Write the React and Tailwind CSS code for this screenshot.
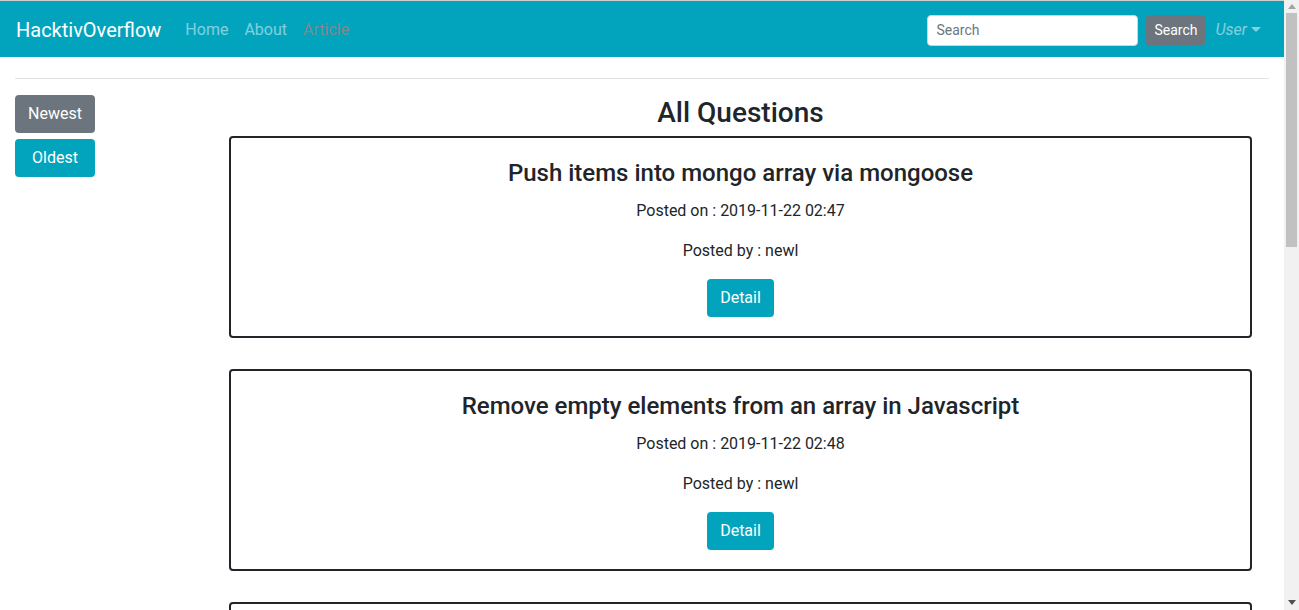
import React from 'react';

const questions = [
  { title: 'Push items into mongo array via mongoose', date: '2019-11-22 02:47', author: 'newl' },
  { title: 'Remove empty elements from an array in Javascript', date: '2019-11-22 02:48', author: 'newl' },
  { title: 'How to sort an array of objects by property value', date: '2019-11-22 02:50', author: 'newl' },
];

function Navbar() {
  return (
    <nav className="flex items-center h-[57px] border-t border-[#cfcfcf] bg-[#02a4bd] pt-[2px] pl-4 pr-[23px]">
      <span className="text-[20px] text-white mr-[24px]">HacktivOverflow</span>
      <div className="flex items-center gap-[16px] text-[16px]">
        <a className="text-white/50">Home</a>
        <a className="text-white/50">About</a>
        <a className="text-[#7c8a8e]">Article</a>
      </div>
      <div className="flex-1" />
      <div className="flex items-center">
        <input
          placeholder="Search"
          className="w-[211px] h-[31px] rounded-[4px] bg-white border border-[#ced4da] px-2 text-[14px] text-[#495057] placeholder:text-[#6c757d] outline-none"
        />
        <button className="ml-2 h-[31px] px-2 rounded-[4px] bg-[#6c757d] text-white text-[14px]">Search</button>
        <span className="ml-[10px] text-[16px] italic text-white/50 flex items-center">
          User
          <svg width="10" height="6" viewBox="0 0 10 6" className="ml-[4px]"><path d="M0 0h10L5 5z" fill="currentColor" /></svg>
        </span>
      </div>
    </nav>
  );
}

function QuestionCard({ q }) {
  return (
    <div className="border-2 border-[#212529] rounded-[4px] pt-[21px] pb-[19px] flex flex-col items-center text-[#212529]">
      <h3 className="text-[24px] leading-[29px] font-medium mb-[11px]">{q.title}</h3>
      <p className="text-[16px] leading-[24px] mb-4">Posted on : {q.date}</p>
      <p className="text-[16px] leading-[24px] mb-4">Posted by : {q.author}</p>
      <button className="h-[38px] px-[13px] rounded-[4px] bg-[#02a4bd] text-white text-[16px]">Detail</button>
    </div>
  );
}

function Scrollbar() {
  return (
    <div className="w-[15px] h-screen bg-[#f1f1f1] flex flex-col items-center shrink-0">
      <div className="h-[13px] flex items-center justify-center">
        <svg width="8" height="5" viewBox="0 0 8 5"><path d="M0 5h8L4 0z" fill="#a3a3a3" /></svg>
      </div>
      <div className="w-[11px] h-[234px] bg-[#c1c1c1]" />
      <div className="flex-1" />
      <div className="h-[15px] flex items-center justify-center">
        <svg width="8" height="5" viewBox="0 0 8 5"><path d="M0 0h8L4 5z" fill="#505050" /></svg>
      </div>
    </div>
  );
}

export default function App() {
  return (
    <div className="flex h-screen overflow-hidden bg-white" style={{ fontFamily: 'Roboto, "Liberation Sans", sans-serif' }}>
      <div className="flex-1 min-w-0">
        <Navbar />
        <div className="px-[15px]">
          <hr className="mt-[21px] border-t border-[#e3e3e3]" />
          <div className="flex mt-4">
            <div className="w-[199px] flex flex-col gap-[6px] shrink-0">
              <button className="w-20 h-[38px] rounded-[4px] bg-[#6c757d] text-white text-[16px]">Newest</button>
              <button className="w-20 h-[38px] rounded-[4px] bg-[#02a4bd] text-white text-[16px]">Oldest</button>
            </div>
            <div className="flex-1 pl-[15px] pr-[17px]">
              <h2 className="text-center text-[28px] leading-[34px] font-medium text-[#212529] mt-px mb-[6px]">All Questions</h2>
              <div className="flex flex-col gap-[31px]">
                {questions.map((q) => (
                  <QuestionCard key={q.title} q={q} />
                ))}
              </div>
            </div>
          </div>
        </div>
      </div>
      <Scrollbar />
    </div>
  );
}
